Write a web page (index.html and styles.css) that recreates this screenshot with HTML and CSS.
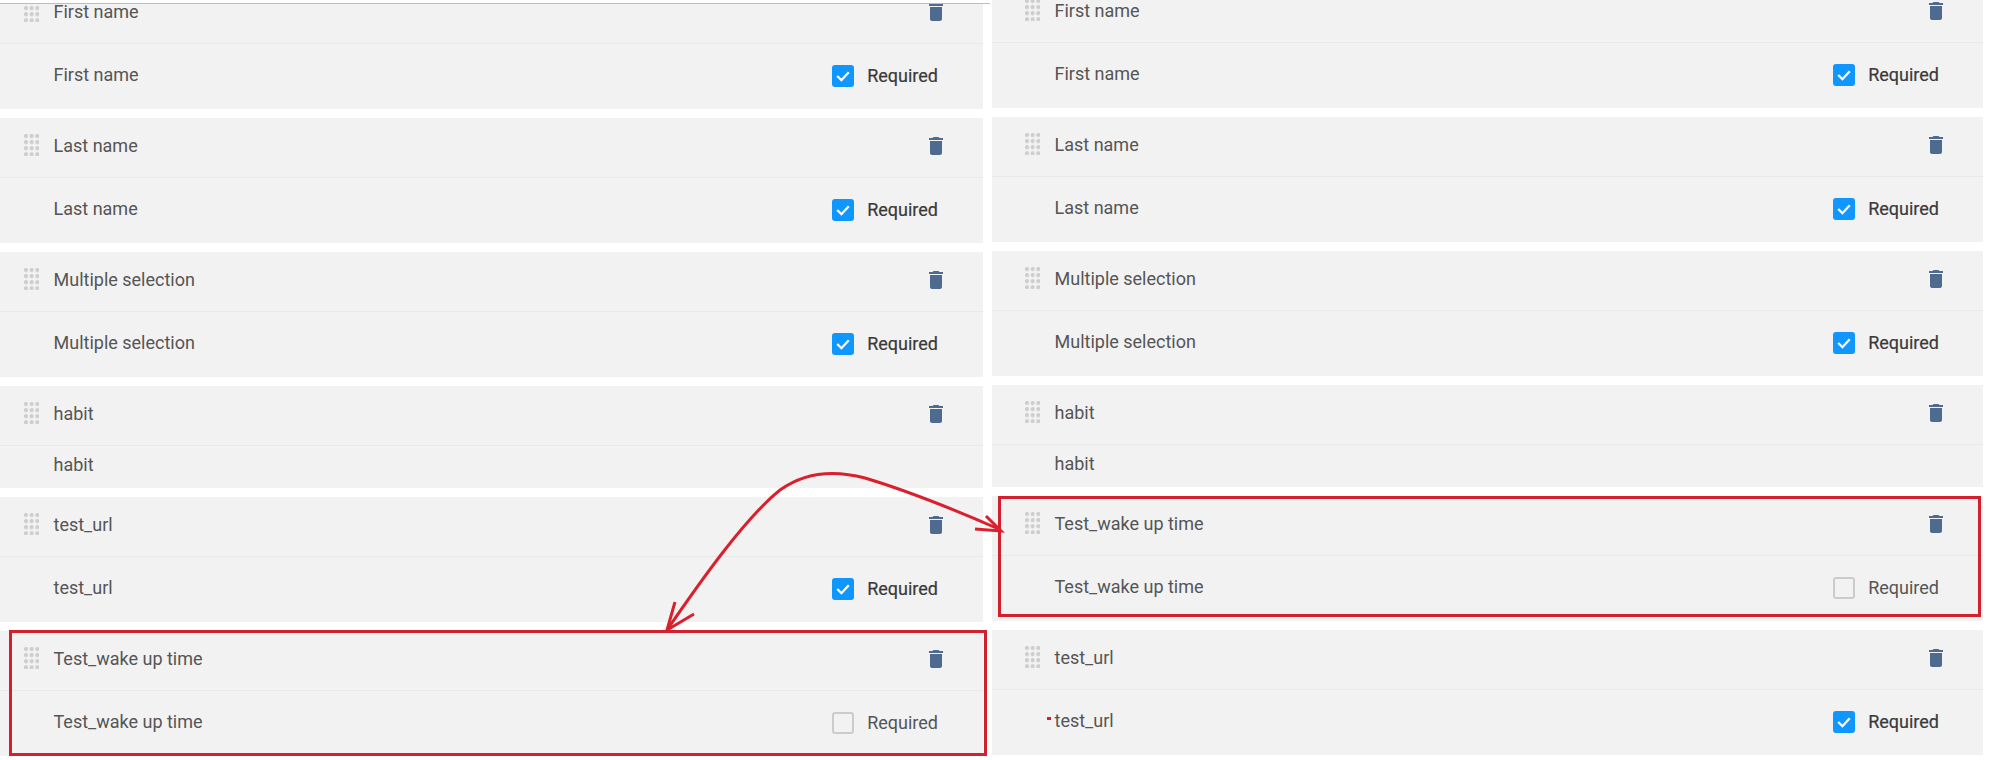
FILE: index.html
```html
<!DOCTYPE html>
<html lang="en">
<head>
  <meta charset="UTF-8" />
  <title>Form fields order</title>
  <link rel="stylesheet" href="styles.css">
</head>
<body>

<svg class="icon-defs" width="0" height="0">
  <symbol id="trash" viewBox="0 0 24 24">
    <path d="M6 19c0 1.1.9 2 2 2h8c1.1 0 2-.9 2-2V7H6v12zM19 4h-3.5l-1-1h-5l-1 1H5v2h14V4z" />
  </symbol>
  <symbol id="tick" viewBox="0 0 21 21">
    <path d="M5 10.5l4 4 7-7.5" fill="none" stroke="#fff" stroke-width="2.2" />
  </symbol>
</svg>

<div class="sheet">
  <div class="topline"></div>

  <div class="columns">
    <section class="column column-left">
      <div class="card">
        <div class="card-head"><span class="grip"></span><span class="name">First name</span><svg class="trash"><use href="#trash" /></svg></div>
        <div class="card-body"><span class="name">First name</span><label class="req"><span class="box checked"><svg><use href="#tick" /></svg></span>Required</label></div>
      </div>
      <div class="card">
        <div class="card-head"><span class="grip"></span><span class="name">Last name</span><svg class="trash"><use href="#trash" /></svg></div>
        <div class="card-body"><span class="name">Last name</span><label class="req"><span class="box checked"><svg><use href="#tick" /></svg></span>Required</label></div>
      </div>
      <div class="card">
        <div class="card-head"><span class="grip"></span><span class="name">Multiple selection</span><svg class="trash"><use href="#trash" /></svg></div>
        <div class="card-body"><span class="name">Multiple selection</span><label class="req"><span class="box checked"><svg><use href="#tick" /></svg></span>Required</label></div>
      </div>
      <div class="card">
        <div class="card-head"><span class="grip"></span><span class="name">habit</span><svg class="trash"><use href="#trash" /></svg></div>
        <div class="card-body short"><span class="name">habit</span></div>
      </div>
      <div class="card">
        <div class="card-head"><span class="grip"></span><span class="name">test_url</span><svg class="trash"><use href="#trash" /></svg></div>
        <div class="card-body"><span class="name">test_url</span><label class="req"><span class="box checked"><svg><use href="#tick" /></svg></span>Required</label></div>
      </div>
      <div class="card marked-left">
        <div class="card-head"><span class="grip"></span><span class="name">Test_wake up time</span><svg class="trash"><use href="#trash" /></svg></div>
        <div class="card-body"><span class="name">Test_wake up time</span><label class="req off"><span class="box"></span>Required</label></div>
      </div>
    </section>

    <section class="column column-right">
      <div class="card">
        <div class="card-head"><span class="grip"></span><span class="name">First name</span><svg class="trash"><use href="#trash" /></svg></div>
        <div class="card-body"><span class="name">First name</span><label class="req"><span class="box checked"><svg><use href="#tick" /></svg></span>Required</label></div>
      </div>
      <div class="card">
        <div class="card-head"><span class="grip"></span><span class="name">Last name</span><svg class="trash"><use href="#trash" /></svg></div>
        <div class="card-body"><span class="name">Last name</span><label class="req"><span class="box checked"><svg><use href="#tick" /></svg></span>Required</label></div>
      </div>
      <div class="card">
        <div class="card-head"><span class="grip"></span><span class="name">Multiple selection</span><svg class="trash"><use href="#trash" /></svg></div>
        <div class="card-body"><span class="name">Multiple selection</span><label class="req"><span class="box checked"><svg><use href="#tick" /></svg></span>Required</label></div>
      </div>
      <div class="card">
        <div class="card-head"><span class="grip"></span><span class="name">habit</span><svg class="trash"><use href="#trash" /></svg></div>
        <div class="card-body short"><span class="name">habit</span></div>
      </div>
      <div class="card marked-right">
        <div class="card-head"><span class="grip"></span><span class="name">Test_wake up time</span><svg class="trash"><use href="#trash" /></svg></div>
        <div class="card-body"><span class="name">Test_wake up time</span><label class="req off"><span class="box"></span>Required</label></div>
      </div>
      <div class="card">
        <div class="card-head"><span class="grip"></span><span class="name">test_url</span><svg class="trash"><use href="#trash" /></svg></div>
        <div class="card-body"><span class="name mark-dot">test_url</span><label class="req"><span class="box checked"><svg><use href="#tick" /></svg></span>Required</label></div>
      </div>
    </section>
  </div>

  <!-- hand drawn arrows over the two lists -->
  <svg class="arrows" viewBox="0 0 1993 760">
    <path d="M1001 530 C960 512 905 490 865 478 C835 470 805 472 780 490 C745 518 700 582 667 630" />
    <path d="M975 529 L1001 531 L986 516" />
    <path d="M675 602 L667 630 L694 614" />
  </svg>
</div>

</body>
</html>
```

FILE: styles.css
```css
body {
  margin: 0;
  background: #fff;
  font-family: 'Roboto', sans-serif;
  color: #555;
}
.icon-defs {
  position: absolute;
}
.sheet {
  position: relative;
  height: 760px;
  overflow: hidden;
}
.topline {
  position: absolute;
  top: 0;
  left: 0;
  z-index: 2;
  width: 990px;
  height: 3px;
  background: #fff;
  border-bottom: 1px solid #bdbdbd;
}
.columns {
  display: flex;
  align-items: flex-start;
  gap: 9px;
  margin-left: -9px;
}
.column {
  display: flex;
  flex-direction: column;
  gap: 9px;
  width: 992px;
  flex: none;
}
.column-left {
  margin-top: -16px;
}
.column-right {
  margin-top: -17px;
  width: 991px;
}
.card {
  position: relative;
  background: #f2f2f2;
}
.card-head {
  display: flex;
  align-items: center;
  height: 59px;
  padding-left: 33px;
  padding-right: 35px;
  border-bottom: 1px solid #e9e9e9;
}
.card-body {
  display: flex;
  align-items: center;
  justify-content: space-between;
  height: 65px;
  padding-left: 62.5px;
  padding-right: 45px;
}
.column-right .card-body {
  padding-right: 44px;
}
.card-body.short {
  height: 42px;
}
.name {
  position: relative;
  top: -2px;
  font-size: 18px;
  line-height: 24px;
}
.card-head .name {
  flex: 1;
}
.grip {
  width: 15px;
  height: 22px;
  margin-right: 14.5px;
  margin-bottom: 6px;
  background: radial-gradient(circle at 2px 2px, #cdcdcd 1.8px, transparent 2.3px) 0 0 / 5.7px 6.1px;
}
.trash {
  width: 24px;
  height: 24px;
  margin-bottom: 3px;
  fill: #4f6a8f;
}
.req {
  display: flex;
  align-items: center;
  gap: 13px;
  position: relative;
  top: -1px;
  font-size: 18px;
  color: #3a3a3a;
  -webkit-text-stroke: 0.2px #3a3a3a;
}
.req.off {
  color: #555;
  -webkit-text-stroke: 0;
}
.box {
  box-sizing: border-box;
  width: 22px;
  height: 22px;
  border: 2px solid #cbcbcb;
  border-radius: 3px;
}
.box.checked {
  background: #0f96ff;
  border: none;
}
.box svg {
  display: block;
  width: 22px;
  height: 22px;
}
.marked-left::after,
.marked-right::after {
  content: "";
  position: absolute;
  border: 3px solid #d3202f;
}
.marked-left::after {
  top: -1px;
  bottom: 0;
  left: 18px;
  right: -4px;
}
.marked-right::after {
  top: 0;
  bottom: 4px;
  left: 6px;
  right: 2px;
}
.mark-dot::before {
  content: "";
  position: absolute;
  left: -8px;
  top: 8px;
  width: 4px;
  height: 3px;
  background: #d3202f;
}
.arrows {
  position: absolute;
  top: 0;
  left: 0;
  width: 1993px;
  height: 760px;
  fill: none;
  stroke: #d9202e;
  stroke-width: 3px;
}
```
